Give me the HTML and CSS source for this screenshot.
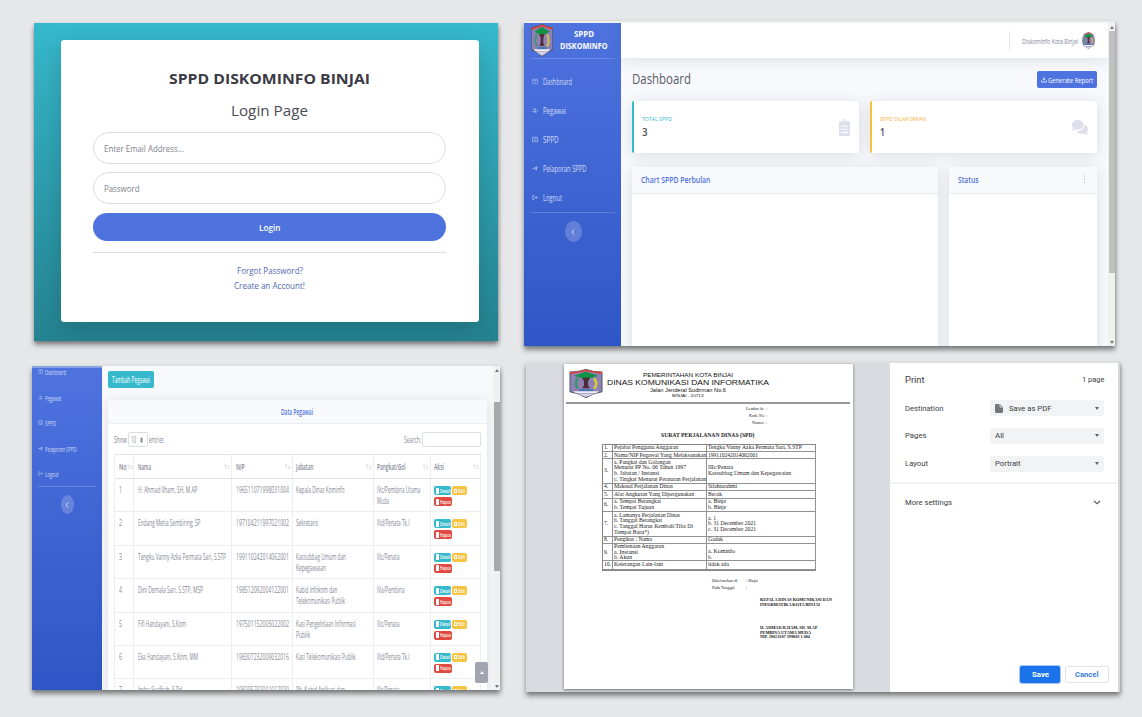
FILE: index.html
```html
<!DOCTYPE html>
<html lang="id">
<head>
<meta charset="utf-8">
<title>SPPD Diskominfo Binjai</title>
<link rel="stylesheet" href="styles.css">
</head>
<body>
<svg class="defs" aria-hidden="true">
  <symbol id="crest" viewBox="0 0 34 28" preserveAspectRatio="none">
    <path d="M1 3Q9 3 17 .5Q25 3 33 3V22Q25 23 17 27.5Q9 23 1 22Z" fill="#8f80b5" stroke="#4b5a63" stroke-width="1"/>
    <path d="M1 5V3Q9 3 17 .5Q25 3 33 3V5L17 2.2Z" fill="#e0433f"/>
    <path d="M5 6.5L17 2.6L29 6.5L21 9H13Z" fill="#109344"/>
    <path d="M9 9Q4.500 14 9 19" fill="none" stroke="#2e9a62" stroke-width="2.200"/>
    <path d="M25 9Q29.500 14 25 19" fill="none" stroke="#d8cf2d" stroke-width="2.400"/>
    <path d="M13 8.500H21L19 12V16L21 18.500H13L15 16V12Z" fill="#4e2c36"/>
    <path d="M10 19.500H24V21.500H10Z" fill="#3c78b8"/>
    <path d="M4 21.500H30L27 23.300H7Z" fill="#f3eef4"/>
    <path d="M8 23.800H26L17 27Z" fill="#d9cfe2"/>
  </symbol>
  <symbol id="i-dash" viewBox="0 0 12 12"><path d="M1 1.500H11V10.500H1ZM1 3.500H11M6 3.500V10.500" fill="none" stroke="currentColor" stroke-width="1.300"/></symbol>
  <symbol id="i-users" viewBox="0 0 12 12"><path d="M4 3.500a2 2 0 1 1 4 0a2 2 0 1 1-4 0M3 10q0-3.500 3-3.500T9 10ZM1 4.500a1 1 0 1 1 2 0a1 1 0 1 1-2 0M9 4.500a1 1 0 1 1 2 0a1 1 0 1 1-2 0M0 8.500q0-2 2.500-2V8.500ZM12 8.500q0-2-2.500-2V8.500Z" fill="currentColor"/></symbol>
  <symbol id="i-list" viewBox="0 0 12 12"><path d="M1 1.500H11V10.500H1ZM3 4.500H9M3 7.500H9" fill="none" stroke="currentColor" stroke-width="1.500"/></symbol>
  <symbol id="i-plane" viewBox="0 0 12 12"><path d="M0 6.500L11 1L9.500 10L5.500 8.500L9 3.500L3.500 7.500Z" fill="currentColor"/></symbol>
  <symbol id="i-out" viewBox="0 0 12 12"><path d="M5 2H1.500V10H5M4 6H10.500M7.500 3L10.500 6L7.500 9" fill="none" stroke="currentColor" stroke-width="1.600"/></symbol>
  <symbol id="i-clip" viewBox="0 0 384 512" preserveAspectRatio="none"><path fill-rule="evenodd" d="M336 64h-80a64 64 0 0 0-128 0H48c-26 0-48 22-48 48v352c0 26 22 48 48 48h288c26 0 48-22 48-48V112c0-26-22-48-48-48zM72 190h48v48H72zm80 4h160v36H152zM72 286h48v48H72zm80 4h160v36H152zM72 382h48v48H72zm80 4h160v36H152zM168 64a24 24 0 1 1 48 0a24 24 0 1 1-48 0z" fill="currentColor"/></symbol>
  <symbol id="i-chat" viewBox="0 0 576 512" preserveAspectRatio="none"><path d="M416 192c0-88-93-160-208-160S0 104 0 192c0 34 14 66 38 92-13 31-36 55-36 56-7 7-2 16 6 16 50 0 91-17 116-31 25 8 54 12 84 12 115 0 208-57 208-145z" fill="currentColor"/><path d="M538 412c24-26 38-57 38-92 0-67-54-124-130-148 2 7 2 13 2 20 0 106-108 192-240 192-10 0-21-1-31-2 31 58 105 98 191 98 30 0 59-5 84-13 25 15 66 32 116 32 8 0 12-9 6-16 0 0-23-40-36-71z" fill="currentColor"/></symbol>
</svg>

<main class="board">
  <section class="shot login">
    <div class="login-card">
      <div class="line title"><b class="t" data-w="201">SPPD DISKOMINFO BINJAI</b></div>
      <div class="line subtitle"><span class="t" data-w="77">Login Page</span></div>
      <div class="field email"><span class="t" data-w="80">Enter Email Address...</span></div>
      <div class="field pass"><span class="t" data-w="35.5">Password</span></div>
      <div class="submit"><span class="t" data-w="21.5">Login</span></div>
      <div class="login-links">
        <div class="line"><span class="t" data-w="66">Forgot Password?</span></div>
        <div class="line"><span class="t" data-w="71">Create an Account!</span></div>
      </div>
    </div>
  </section>

  <section class="shot dash">
    <aside class="side">
      <div class="brand">
        <svg class="brand-logo"><use href="#crest"/></svg>
        <div class="brand-name">
          <b class="t" data-w="20">SPPD</b>
          <b class="t" data-w="47.5">DISKOMINFO</b>
        </div>
      </div>
      <nav class="nav">
        <div class="nav-item"><svg><use href="#i-dash"/></svg><span class="t" data-w="29">Dashboard</span></div>
        <div class="nav-item"><svg><use href="#i-users"/></svg><span class="t" data-w="23">Pegawai</span></div>
        <div class="nav-item"><svg><use href="#i-list"/></svg><span class="t" data-w="15.5">SPPD</span></div>
        <div class="nav-item"><svg><use href="#i-plane"/></svg><span class="t" data-w="43.5">Pelaporan SPPD</span></div>
        <div class="nav-item"><svg><use href="#i-out"/></svg><span class="t" data-w="19">Logout</span></div>
      </nav>
      <div class="toggle"><svg viewBox="0 0 6 8"><path d="M4 1.500L2 4L4 6.500" fill="none" stroke="currentColor"/></svg></div>
    </aside>
    <div class="dash-main">
      <header class="topbar"><i class="sep"></i><span class="t" data-w="56">Diskominfo Kota Binjai</span><svg class="avatar"><use href="#crest"/></svg></header>
      <div class="dash-body">
        <div class="heading">
          <span class="t h1" data-w="59">Dashboard</span>
          <div class="report"><svg viewBox="0 0 12 12"><path d="M6 1V7M3.500 5L6 7.500L8.500 5M1 8V11H11V8" fill="none" stroke="currentColor" stroke-width="1.500"/></svg><span class="t" data-w="45">Generate Report</span></div>
        </div>
        <div class="stats">
          <div class="stat teal"><div><b class="t cap" data-w="30">TOTAL SPPD</b><b class="t num" data-w="5.500">3</b></div><svg class="clip"><use href="#i-clip"/></svg></div>
          <div class="stat amber"><div><b class="t cap" data-w="46">SPPD DILAPORKAN</b><b class="t num" data-w="5">1</b></div><svg class="chat"><use href="#i-chat"/></svg></div>
        </div>
        <div class="charts">
          <div class="chart"><div class="chart-head"><b class="t" data-w="69.5">Chart SPPD Perbulan</b></div></div>
          <div class="chart"><div class="chart-head"><b class="t" data-w="20.5">Status</b><i class="dots"></i></div></div>
        </div>
      </div>
    </div>
    <div class="scroll"><i class="up"></i><i class="thumb"></i><i class="down"></i></div>
  </section>

  <section class="shot staff">
    <aside class="side">
      <nav class="nav">
        <div class="nav-item"><svg><use href="#i-dash"/></svg><span class="t" data-w="21">Dashboard</span></div>
        <div class="nav-item"><svg><use href="#i-users"/></svg><span class="t" data-w="16">Pegawai</span></div>
        <div class="nav-item"><svg><use href="#i-list"/></svg><span class="t" data-w="11">SPPD</span></div>
        <div class="nav-item"><svg><use href="#i-plane"/></svg><span class="t" data-w="31.5">Pelaporan SPPD</span></div>
        <div class="nav-item"><svg><use href="#i-out"/></svg><span class="t" data-w="13.5">Logout</span></div>
      </nav>
      <div class="toggle"><svg viewBox="0 0 6 8"><path d="M4 1.500L2 4L4 6.500" fill="none" stroke="currentColor"/></svg></div>
    </aside>
    <div class="staff-main">
      <div class="add"><span class="t" data-w="38">Tambah Pegawai</span></div>
      <div class="panel">
        <div class="panel-head"><b class="t" data-w="32">Data Pegawai</b></div>
        <div class="tools">
          <span class="t" data-w="13">Show</span>
          <div class="select"><span class="t" data-w="5">10</span><svg viewBox="0 0 4 8"><path d="M0 3.300L2 .5L4 3.300ZM0 4.700L2 7.500L4 4.700Z" fill="#555"/></svg></div>
          <span class="t" data-w="15">entries</span>
          <span class="t search-label" data-w="17">Search:</span>
          <div class="search"></div>
        </div>
        <div class="grid" id="grid">
          <div class="row head">
            <div><b class="t" data-w="7.5">No</b><i class="sort">↑↓</i></div>
            <div><b class="t" data-w="13">Nama</b><i class="sort">↑↓</i></div>
            <div><b class="t" data-w="8.5">NIP</b><i class="sort">↑↓</i></div>
            <div><b class="t" data-w="17.5">Jabatan</b><i class="sort">↑↓</i></div>
            <div><b class="t" data-w="28.5">Pangkat/Gol</b><i class="sort">↑↓</i></div>
            <div><b class="t" data-w="10">Aksi</b><i class="sort">↑↓</i></div>
          </div>
        </div>
      </div>
    </div>
    <div class="scroll"><i class="up"></i><i class="thumb"></i><i class="down"></i></div>
    <div class="to-top"><i></i></div>
  </section>

  <section class="shot print">
    <div class="preview">
      <article class="paper">
        <header class="letterhead">
          <svg><use href="#crest"/></svg>
          <div class="org">
            <span class="t l1" data-w="90">PEMERINTAHAN KOTA BINJAI</span>
            <span class="t l2" data-w="162">DINAS KOMUNIKASI DAN INFORMATIKA</span>
            <span class="t l3" data-w="76">Jalan Jenderal Sudirman No.6</span>
            <span class="t l4" data-w="31.5">BINJAI - 20713</span>
          </div>
        </header>
        <div class="meta">
          <span class="t" data-w="21.5">Lembar ke&nbsp; :</span>
          <span class="t" data-w="18.5">Kode No&nbsp; :</span>
          <span class="t" data-w="15">Nomor&nbsp; :</span>
        </div>
        <div class="doc-title"><b class="t" data-w="93.5">SURAT PERJALANAN DINAS (SPD)</b></div>
        <div class="spd">
          <div>1.</div><div><span class="t" data-w="64">Pejabat Pengguna Anggaran</span></div><div><span class="t" data-w="94">Tengku Vanny Azka Permata Sari, S.STP</span></div>
          <div>2.</div><div><span class="t" data-w="92">Nama/NIP Pegawai Yang Melaksanakan</span></div><div><span class="t" data-w="50">199110242014062001</span></div>
          <div>3.</div><div><span class="t" data-w="56.5">a. Pangkat dan Golongan</span><span class="t" data-w="72">Menurut PP No. 06 Tahun 1997</span><span class="t" data-w="45">b. Jabatan / Instansi</span><span class="t" data-w="92">c. Tingkat Menurut Peraturan Perjalanan</span></div><div><span class="t" data-w="25">IIIc/Penata</span><span class="t" data-w="83">Kassubbag Umum dan Kepegawaian</span></div>
          <div>4.</div><div><span class="t" data-w="59">Maksud Perjalanan Dinas</span></div><div><span class="t" data-w="29">Silahturahmi</span></div>
          <div>5.</div><div><span class="t" data-w="80">Alat Angkutan Yang Dipergunakan</span></div><div><span class="t" data-w="14">Becak</span></div>
          <div>6.</div><div><span class="t" data-w="47">a. Tempat Berangkat</span><span class="t" data-w="40">b. Tempat Tujuan</span></div><div><span class="t" data-w="18">a. Binje</span><span class="t" data-w="18">b. Binje</span></div>
          <div>7.</div><div><span class="t" data-w="66">a. Lamanya Perjalanan Dinas</span><span class="t" data-w="48">b. Tanggal Berangkat</span><span class="t" data-w="79">c. Tanggal Harus Kembali/Tiba Di</span><span class="t" data-w="35">Tempat Baru*)</span></div><div><span class="t" data-w="8">a. 1</span><span class="t" data-w="48">b. 31 December 2021</span><span class="t" data-w="48">c. 31 December 2021</span></div>
          <div>8.</div><div><span class="t" data-w="38">Pengikut : Nama</span></div><div><span class="t" data-w="15">Gadak</span></div>
          <div>9.</div><div><span class="t" data-w="50">Pembenaan Anggaran</span><span class="t" data-w="24">a. Instansi</span><span class="t" data-w="18">b. Akun</span></div><div class="low"><span class="t" data-w="27">a. Kominfo</span><span class="t" data-w="4">b.</span></div>
          <div>10.</div><div><span class="t" data-w="49">Keterangan Lain-lain</span></div><div><span class="t" data-w="21">tidak ada</span></div>
        </div>
        <div class="issued">
          <span class="t" data-w="25.5">Dikeluarkan di</span><span class="t" data-w="12">: Binjai</span>
          <span class="t" data-w="22.500">Pada Tanggal</span><span class="t" data-w="1">:</span>
        </div>
        <div class="sign">
          <b class="t" data-w="72">KEPALA DINAS KOMUNIKASI DAN</b>
          <b class="t" data-w="60">INFORMATIKA KOTA BINJAI</b>
          <b class="t gap" data-w="57.500">H. AHMAD ILHAM, SH. M.AP</b>
          <b class="t" data-w="51">PEMBINA UTAMA MUDA</b>
          <b class="t" data-w="50">NIP. 19651107 199803 1 004</b>
        </div>
      </article>
    </div>
    <div class="options">
      <div class="opt-head"><span class="t big" data-w="19.5">Print</span><span class="t" data-w="22.5">1 page</span></div>
      <div class="opt"><span class="t" data-w="38.5">Destination</span><div class="drop"><svg class="file" viewBox="0 0 8 9"><path d="M0 1Q0 0 1 0H5L8 3V8Q8 9 7 9H1Q0 9 0 8Z" fill="#73777c"/><path d="M5 0V3H8" fill="none" stroke="#f1f3f4" stroke-width=".8"/></svg><span class="t" data-w="42.5">Save as PDF</span><i class="caret"></i></div></div>
      <div class="opt"><span class="t" data-w="21.5">Pages</span><div class="drop"><span class="t" data-w="9">All</span><i class="caret"></i></div></div>
      <div class="opt"><span class="t" data-w="23">Layout</span><div class="drop"><span class="t" data-w="25.5">Portrait</span><i class="caret"></i></div></div>
      <div class="more"><span class="t" data-w="47">More settings</span><svg viewBox="0 0 8 5"><path d="M1 1L4 3.800L7 1" fill="none" stroke="#5f6368" stroke-width="1.200"/></svg></div>
      <div class="actions"><div class="btn save"><b class="t" data-w="17">Save</b></div><div class="btn cancel"><b class="t" data-w="23.500">Cancel</b></div></div>
    </div>
  </section>
</main>
<script src="app.js"></script>
</body>
</html>
```
FILE: styles.css
```css
* { box-sizing: border-box; }
body {
  margin: 0; width: 1142px; height: 717px; overflow: hidden;
  background: #e5e7e9; font-family: "Open Sans", "Noto Sans", sans-serif;
}
.defs { display: none; }
i { font-style: normal; }
svg { display: block; flex: none; }
.t { display: block; flex: none; width: max-content; white-space: nowrap; transform-origin: 0 50%; }

.board { display: grid; grid-template-columns: 500px 594px; grid-template-rows: 325px 330px; column-gap: 26px; row-gap: 16px; padding-top: 21px; }
.shot { position: relative; display: flex; overflow: hidden; box-shadow: 0 4px 5px rgba(0,0,0,.42), 1px 1px 3px rgba(0,0,0,.15); }

/* login */
.login { margin: 2px 2px 5px 34px; padding: 17px 19px 19px 27px; background: linear-gradient(#36b9cc, #258391); }
.login-card { width: 418px; height: 282px; padding: 26px 33px 0 32px; border-radius: 3px; background: #fff; box-shadow: 0 8px 24px rgba(0,0,0,.16); }
.line { display: flex; justify-content: center; align-items: center; }
.title { height: 24px; font-size: 14px; color: #3a3b45; }
.subtitle { height: 41px; padding-bottom: 1px; font-size: 15px; color: #4b4c55; }
.field { display: flex; align-items: center; height: 32px; margin-top: 1px; padding-left: 10px; border: 1px solid #dcdde3; border-radius: 16px; font-size: 8.5px; color: #80828c; }
.pass { margin-top: 8px; }
.submit { display: flex; align-items: center; justify-content: center; height: 28px; margin-top: 9px; border-radius: 14px; background: #4e73df; color: #fff; font-size: 8.5px; font-weight: 600; }
.login-links { margin-top: 11px; padding-top: 10px; border-top: 1px solid #dcdde1; font-size: 8.5px; color: #5168b4; }
.login-links .line { height: 15px; }

/* sidebar */
.side { flex: none; background: linear-gradient(#4e73df, #2f56c6); color: #d3dcf7; }
.dash { width: 591px; margin-left: -2px; border-top: 2px solid #eeeff1; background: #f8f9fc; }
.dash .side { width: 97px; padding: 0 6px 0 7px; }
.brand { display: flex; height: 36px; border-bottom: 1px solid rgba(255,255,255,.18); }
.brand-logo { width: 22px; height: 33px; margin-top: 1px; }
.brand-name { display: flex; flex-direction: column; align-items: center; width: 62px; padding-top: 5px; font-size: 8.4px; line-height: 12px; color: #fff; }
.nav-item { display: flex; align-items: center; }
.dash .nav { height: 154px; padding-top: 8px; border-bottom: 1px solid rgba(255,255,255,.18); }
.dash .nav-item { height: 29px; gap: 5px; font-size: 8.2px; }
.dash .nav-item svg { width: 6px; height: 7px; margin-left: 1px; color: #a4b6ee; }
.toggle { display: flex; align-items: center; justify-content: center; border-radius: 50%; background: rgba(255,255,255,.2); color: #d3dcf7; }
.dash .toggle { width: 17px; height: 21px; margin: 8px auto 0; }
.toggle svg { width: 6px; height: 8px; }

/* dashboard */
.dash-main { flex: 1; min-width: 0; }
.topbar { position: relative; display: flex; align-items: center; justify-content: flex-end; height: 35px; padding: 0 13px 1px 0; background: #fff; box-shadow: 0 2px 14px rgba(58,59,69,.14); font-size: 8px; color: #858796; }
.sep { width: 1px; height: 19px; margin-right: 12px; background: #e3e6f0; }
.avatar { width: 13px; height: 17px; margin-left: 4px; border-radius: 50%; }
.dash-body { padding: 0 11px; }
.heading { display: flex; justify-content: space-between; align-items: center; height: 43px; padding-bottom: 1px; }
.h1 { margin-top: -1px; font-size: 14.4px; color: #5a5c69; }
.report { display: flex; align-items: center; gap: 1px; width: 60px; height: 17px; padding-left: 4px; border-radius: 2px; background: #4e73df; color: #fff; font-size: 8px; }
.report svg { width: 6px; height: 7px; }
.stats { display: grid; grid-template-columns: 227px 227px; gap: 11px; }
.stat { display: flex; align-items: center; justify-content: space-between; height: 52px; padding: 0 9px 0 8px; border-left: 2px solid; border-radius: 2px; background: #fff; box-shadow: 0 2px 14px rgba(58,59,69,.15); }
.stat > div { padding-bottom: 1px; }
.stat .cap { font-size: 6px; line-height: 11px; font-weight: 400; }
.stat .num { font-size: 10.4px; line-height: 14px; font-weight: 600; color: #4a4c58; }
.stat.teal { border-color: #36b9cc; }
.stat.amber { border-color: #f6c23e; }
.teal .cap { color: #36b9cc; }
.amber .cap { color: #f6b33e; }
.stat svg { color: #dddfeb; }
.clip { width: 11px; height: 17px; }
.chat { width: 16px; height: 16px; }
.charts { display: grid; grid-template-columns: 306px 148px; gap: 11px; margin-top: 14px; }
.chart { height: 190px; border-radius: 2px; background: #fff; box-shadow: 0 2px 14px rgba(58,59,69,.15); }
.chart-head { display: flex; align-items: center; justify-content: space-between; height: 27px; padding: 0 12px 2px 9px; border-bottom: 1px solid #e9ecf4; background: #f8f9fc; font-size: 8px; color: #4e73df; }
.chart-head b { font-weight: 600; }
.dots { width: 1px; height: 8px; border-top: 2px solid #cfd1dc; border-bottom: 2px solid #cfd1dc; background: linear-gradient(transparent 1px, #cfd1dc 1px 3px, transparent 3px); }

/* scroll bars */
.scroll { position: relative; z-index: 1; display: flex; flex-direction: column; align-items: center; width: 7px; background: #f1f1f1; }
.up, .down { border: 2px solid transparent; }
.up { margin-top: 3px; border-bottom: 3px solid #777; border-top: 0; }
.down { margin: auto 0 2px; border-top: 3px solid #777; border-bottom: 0; }
.thumb { width: 6px; height: 242px; margin-top: 2px; background: #c1c1c1; }

/* staff list */
.staff { margin: 4px 0 2px 32px; background: #f8f9fc; }
.staff .side { width: 70px; padding: 0 6px; border-top: 2px solid #8aa1e4; }
.staff .nav { display: flex; flex-direction: column; height: 120px; margin-top: -1px; border-bottom: 1px solid rgba(255,255,255,.18); }
.staff .nav-item { height: 25.8px; gap: 2px; font-size: 8px; }
.staff .nav-item:first-child { height: 9px; margin-bottom: 9px; }
.staff .nav-item svg { width: 5px; height: 7px; color: #a4b6ee; }
.staff .toggle { width: 13px; height: 19px; margin: 8px auto 0; }
.staff-main { flex: 1; min-width: 0; padding: 5px 6px 0; }
.add { display: flex; align-items: center; justify-content: center; width: 46px; height: 17px; padding-bottom: 1px; border-radius: 2px; background: #36b9cc; color: #fff; font-size: 8.2px; }
.panel { width: 379px; height: 300px; margin-top: 12px; background: #fff; box-shadow: 0 2px 12px rgba(58,59,69,.15); }
.panel-head { display: flex; align-items: center; justify-content: center; height: 24px; padding: 0 1px 1px 0; background: #f8f9fc; border-bottom: 1px solid #eceef5; font-size: 8.2px; color: #4e73df; }
.panel-head b { font-weight: 600; }
.tools { display: flex; align-items: center; height: 30px; padding: 1px 6px 0; font-size: 8.2px; color: #858796; }
.select { display: flex; align-items: center; justify-content: space-between; width: 20px; height: 15px; margin: 0 1px; padding: 0 4px 0 2px; border: 1px solid #dcdee6; border-radius: 2px; }
.select svg { width: 3px; height: 6px; }
.search-label { margin-left: auto; }
.search { width: 59px; height: 15px; margin-left: 1px; border: 1px solid #dcdee6; border-radius: 2px; }
.grid { width: 367px; margin-left: 6px; border-left: 1px solid #eceef4; border-top: 1px solid #e3e6f0; font-size: 8.2px; line-height: 11px; color: #858796; }
.row { display: grid; grid-template-columns: 19px 98px 60.500px 81px 57px 50.500px; height: 33.4px; border-bottom: 1px solid #eceef4; }
.row > div { padding: 5px 0 0 3.500px; border-right: 1px solid #eceef4; overflow: hidden; }
.row.head { height: 24px; border-bottom: 1px solid #dfe2ec; }
.row.head > div { display: flex; align-items: center; justify-content: space-between; padding: 0 0 1px 3.500px; }
.row.head b { font-weight: 600; }
.sort { padding-right: 2px; font: 6px "DejaVu Sans", sans-serif; letter-spacing: -2px; color: #cfd1db; }
.row .acts { display: grid; grid-template-columns: 17px 15px; grid-template-rows: 9px 9px; gap: 2px 1px; padding-top: 7px; }
.tag { display: flex; align-items: center; gap: 1px; height: 9px; padding-left: 2px; border-radius: 2px; color: #fff; font-size: 5.4px; line-height: 8px; font-weight: 600; }
.tag i { width: 2.500px; height: 6px; background: #fff; border-radius: .5px; }
.detail { background: #36b9cc; }
.edit { background: #f6c544; }
.hapus { width: 18px; background: #e04a40; }
.edit i { width: 3px; height: 4px; background: transparent; border: 1px solid #fff; }
.staff .up { margin-top: 3px; }
.staff .thumb { height: 169px; margin-top: 30px; background: #a8a8a8; }
.to-top { position: absolute; right: 12px; bottom: 7px; display: flex; align-items: center; justify-content: center; width: 13px; height: 21px; border-radius: 2px; background: #a2a4af; }
.to-top i { border: 2px solid transparent; border-top: 0; border-bottom: 3px solid #fff; }

/* print dialog */
.print { border-top: 1px solid #dfe0e3; border-right: 2px solid #d4d6d8; background: #fff; }
.preview { flex: none; width: 364px; padding: 1px 0 0 38px; background: #d9dbe0; }
.paper { width: 289px; height: 325px; padding-top: 5px; background: #fff; box-shadow: 0 1px 3px rgba(0,0,0,.5); font-family: "Liberation Serif", serif; font-size: 5.6px; line-height: 5.65px; color: #222; }
.letterhead { display: flex; gap: 4px; width: 284px; height: 35px; margin-left: 2px; padding-left: 3px; border-bottom: 2px solid #999; font-family: "Liberation Sans", sans-serif; }
.letterhead svg { width: 34px; height: 29px; }
.org { display: flex; flex-direction: column; align-items: center; width: 162px; padding-top: 3px; color: #111; }
.l1 { font-size: 5.8px; line-height: 7px; }
.l2 { font-size: 7.8px; line-height: 8px; }
.l3 { font-size: 5.4px; line-height: 6px; }
.l4 { font-size: 4.4px; line-height: 6px; }
.meta { display: flex; flex-direction: column; align-items: flex-end; width: 203px; padding-top: 2px; font-size: 5px; line-height: 6.800px; }
.doc-title { display: flex; justify-content: center; width: 288px; padding-top: 6px; font-size: 6px; line-height: 7px; }
.spd { display: grid; grid-template-columns: 9.500px 94.500px 108.500px; grid-template-rows: 7.5px 7px 24.5px 7.5px 7.5px 13.5px 24.5px 7.5px 17px 8.500px; width: 214px; margin: 4.500px 0 0 38px; border: 1px solid #858585; }
.spd > div { display: flex; flex-direction: column; justify-content: center; padding-left: 1px; border: solid #929292; border-width: 0 1px 1px 0; white-space: nowrap; }
.spd > .low { justify-content: flex-end; }
.issued { display: grid; grid-template-columns: 34px 20px; margin: 6px 0 0 148px; font-size: 5px; line-height: 7.300px; }
.sign { margin: 6.500px 0 0 196px; font-size: 5px; line-height: 4.700px; color: #111; }
.gap { margin-top: 18.500px; }

.options { flex: 1; font-family: Roboto, sans-serif; font-size: 7.4px; color: #3c4043; }
.opt-head { display: flex; align-items: center; justify-content: space-between; height: 33px; padding: 0 14px 0 15px; }
.opt-head .big { font-size: 8.5px; }
.opt { display: flex; align-items: center; justify-content: space-between; height: 28px; padding: 0 14px 5px 15px; }
.opt:nth-child(2) { padding-bottom: 4px; }
.drop { display: flex; align-items: center; width: 114px; height: 16px; padding: 0 5px; border-radius: 2px; background: #f1f3f4; }
.file { width: 8px; height: 9px; margin-right: 6px; }
.caret { margin-left: auto; border: 2.500px solid transparent; border-top: 3px solid #5f6368; border-bottom: 0; }
.more { display: flex; align-items: center; justify-content: space-between; height: 49px; margin-top: 2px; padding: 0 17px 10px 15px; border-top: 2px solid #f1f2f4; }
.more svg { width: 8px; height: 5px; }
.actions { display: flex; justify-content: flex-end; gap: 5px; margin-top: 135px; padding-right: 9px; font-size: 7.2px; }
.btn { display: flex; align-items: center; justify-content: center; width: 44px; height: 17px; border-radius: 2px; }
.save { width: 40px; background: #1a73e8; color: #fff; box-shadow: 0 0 0 1px #a9caf6; }
.cancel { border: 1px solid #e1e3e6; color: #3b7ddd; }
```
FILE: app.js
```js
const staff = [
  [['H. Ahmad Ilham, SH, M.AP', 59.5], '196511071998031004', [['Kepala Dinas Kominfo', 48.5]], [['IVc/Pembina Utama', 43.5], ['Muda', 12]]],
  [['Endang Metia Sembiring, SP', 62.5], '197104211997021002', [['Sekretaris', 22]], [['IIId/Penata Tk.I', 32.5]]],
  [['Tengku Vanny Azka Permata Sari, S.STP', 88], '199110242014062001', [['Kassubbag Umum dan', 50], ['Kepegawaian', 30]], [['IIIc/Penata', 22.5]]],
  [['Dini Demala Sari, S.STP, MSP', 65], '198512092004122001', [['Kabid Infokom dan', 41.5], ['Telekomunikasi Publik', 49]], [['IVa/Pembina', 27.5]]],
  [['Fifi Handayani, S.Kom', 48], '197501152005022002', [['Kasi Pengelolaan Informasi', 60], ['Publik', 14]], [['IIIc/Penata', 22.5]]],
  [['Eka Handayani, S.Kom, MM', 60], '198307232009032016', [['Kasi Telekomunikasi Publik', 59.5]], [['IIId/Penata Tk.I', 32.5]]],
  [['Indra Syafitah, S.Pd', 44], '198205232011012020', [['Plt. Kabid Aplikasi dan', 49]], [['IIIc/Penata', 22.5]]]
];

const text = ([label, width]) => `<span class="t" data-w="${width}">${label}</span>`;
const tag = (kind, label, width) => `<div class="tag ${kind}"><i></i>${text([label, width])}</div>`;

document.getElementById('grid').insertAdjacentHTML('beforeend', staff.map(([name, nip, job, rank], n) =>
  `<div class="row"><div>${text([n + 1, 3])}</div><div>${text(name)}</div><div>${text([nip, 53])}</div>` +
  `<div>${job.map(text).join('')}</div><div>${rank.map(text).join('')}</div>` +
  `<div class="acts">${tag('detail', 'Detail', 10.5)}${tag('edit', 'Edit', 7)}${tag('hapus', 'Hapus', 11)}</div></div>`).join(''));

document.querySelectorAll('.t').forEach(el => {
  const natural = el.getBoundingClientRect().width;
  const target = Number(el.dataset.w);
  el.style.transform = `scaleX(${target / natural})`;
  el.style.marginRight = `${target - natural}px`;
});
```
